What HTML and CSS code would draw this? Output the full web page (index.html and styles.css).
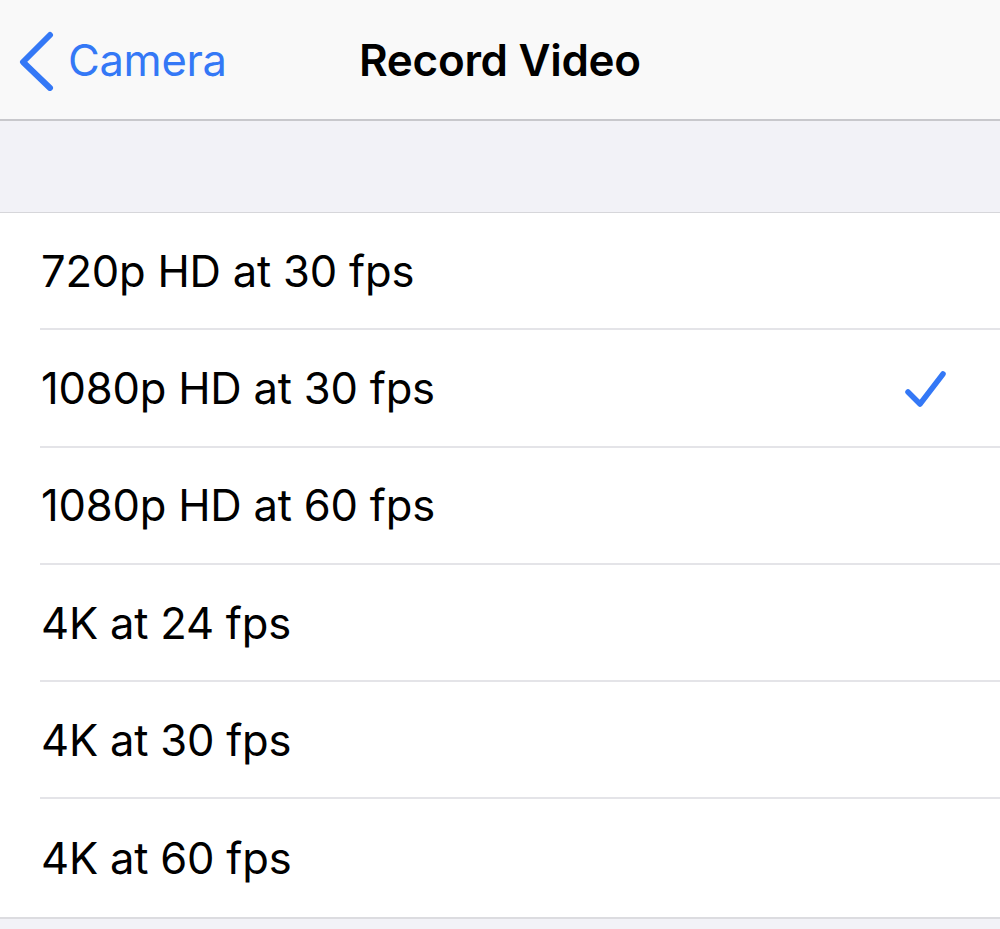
FILE: index.html
```html
<!DOCTYPE html>
<html>
<head>
<meta charset="utf-8">
<link rel="stylesheet" href="styles.css">
</head>
<body>
<div class="nav">
  <div class="back">
    <svg class="chev" width="40" height="60" viewBox="0 0 40 60"><path d="M34 4 L7 31 L34 57" fill="none" stroke="#3478f6" stroke-width="6" stroke-linecap="round" stroke-linejoin="round"/></svg>
    <span class="back-label">Camera</span>
  </div>
  <div class="title">Record Video</div>
</div>
<div class="gap"></div>
<ul class="list">
  <li class="row"><span class="label">720p HD at 30 fps</span></li>
  <li class="row"><span class="label">1080p HD at 30 fps</span>
    <svg class="check" width="44" height="44" viewBox="0 0 44 44"><path d="M4 24 L16 36 L39 6" fill="none" stroke="#3478f6" stroke-width="5.5" stroke-linecap="round" stroke-linejoin="round"/></svg>
  </li>
  <li class="row"><span class="label">1080p HD at 60 fps</span></li>
  <li class="row"><span class="label">4K at 24 fps</span></li>
  <li class="row"><span class="label">4K at 30 fps</span></li>
  <li class="row"><span class="label">4K at 60 fps</span></li>
</ul>
<div class="footer"></div>
</body>
</html>
```
FILE: styles.css
```css
* { box-sizing: border-box; }
html, body { margin: 0; padding: 0; }
body {
  width: 1000px;
  height: 929px;
  overflow: hidden;
  background: #f2f2f7;
  font-family: Inter, "Noto Sans", sans-serif;
  -webkit-font-smoothing: antialiased;
}
.nav {
  height: 121px;
  background: #f9f9f9;
  border-bottom: 2px solid #c8c8cc;
  display: flex;
  align-items: center;
  position: relative;
}
.back {
  display: flex;
  align-items: center;
  padding-left: 16px;
  gap: 12px;
}
.chev { margin-top: 2px; }
.back-label {
  color: #3478f6;
  font-size: 43.5px;
  letter-spacing: -0.3px;
}
.title {
  position: absolute;
  left: 359px;
  font-size: 44px;
  font-weight: 600;
  color: #000;
  letter-spacing: -0.3px;
}
.gap {
  height: 92px;
  background: #f2f2f7;
  border-bottom: 1px solid #d6d6da;
}
.list {
  list-style: none;
  margin: 0;
  padding: 0 0 0 40px;
  background: #fff;
  border-bottom: 2px solid #dcdce0;
}
.row {
  height: 117.3px;
  display: flex;
  align-items: center;
  justify-content: space-between;
  border-bottom: 2px solid #e4e4e8;
  padding-right: 52px;
}
.row:last-child { border-bottom: none; }
.label {
  font-size: 43.5px;
  color: #000;
  padding-left: 1px;
  letter-spacing: -0.2px;
}
.check { margin-top: 4px; }
.footer { height: 20px; }
```
